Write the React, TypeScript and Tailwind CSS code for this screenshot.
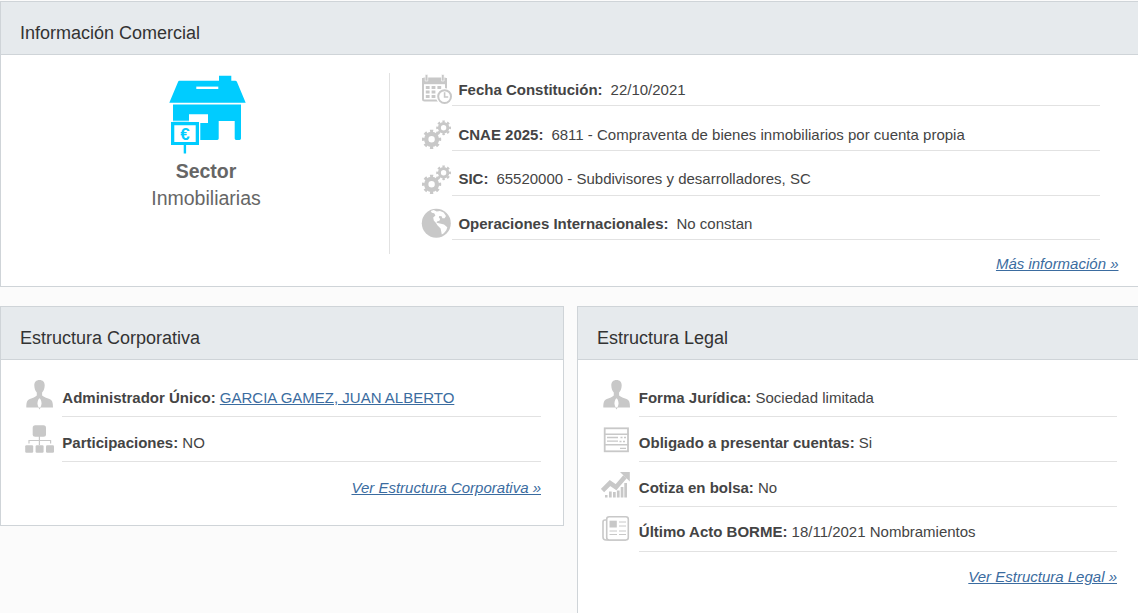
import type { ReactNode } from "react";

type IconProps = { children: ReactNode };

const Icon = ({ children }: IconProps) => (
  <svg
    className="h-8 w-8 shrink-0 fill-[#c8c8c8] text-[#c8c8c8]"
    viewBox="0 0 32 32"
  >
    {children}
  </svg>
);

const CalendarIcon = () => (
  <Icon>
    <rect x="2" y="4.5" width="23" height="22" rx="1.5" fill="#fff" stroke="currentColor" strokeWidth="2" />
    <rect x="1" y="4" width="25" height="6.2" />
    <path d="M4.2 0.5h2.6v6.5H4.2zM20.5 0.5h2.6v6.5h-2.6z" stroke="#fff" strokeWidth="0.6" />
    <path d="M4.8 12h3.8v3H4.8zM10.6 12h3.8v3h-3.8zM16.4 12h3.8v3h-3.8zM4.8 16.5h3.8v3H4.8zM10.6 16.5h3.8v3h-3.8zM4.8 21h3.8v3H4.8zM10.6 21h3.8v3h-3.8z" />
    <circle cx="23.6" cy="22.6" r="8.6" fill="#fff" />
    <circle cx="23.6" cy="22.6" r="6.4" fill="#fff" stroke="currentColor" strokeWidth="2" />
    <path d="M23.6 18.2v4.8h3.6" fill="none" stroke="currentColor" strokeWidth="1.6" />
  </Icon>
);

const GearsIcon = () => (
  <Icon>
    <g fill="none" stroke="currentColor">
      <circle cx="10.6" cy="20.3" r="5.4" strokeWidth="4.4" />
      <circle cx="10.6" cy="20.3" r="8.2" strokeWidth="2.8" pathLength="80" strokeDasharray="5 5" strokeDashoffset="2.5" />
      <circle cx="22.6" cy="8.8" r="4.2" strokeWidth="3" />
      <circle cx="22.6" cy="8.8" r="6.3" strokeWidth="2.2" pathLength="80" strokeDasharray="5 5" strokeDashoffset="2.5" />
    </g>
  </Icon>
);

const GlobeIcon = () => (
  <Icon>
    <circle cx="15.3" cy="15.3" r="14.5" />
    <path
      d="M9.700 3l3-.9 3 1.400 3.300-.6 3.600 1.700 2.400 3.400-1.400 2.200-2.200.1-.8-2-2.400-.2-.4 1.400 1.400 1.500-.8 1.800-2.400.6-.4 1.400 3.400.6 4 1.200 3.300 2.700-1 2.900-2.500 3-2 1.400-.6-3-.6-3-3-3-1.600-2.600-2.200-2.400-.6-3 2.200-2.200-1.200-2.200-2.400-.4z"
      fill="#fff"
    />
  </Icon>
);

const PersonIcon = () => (
  <Icon>
    <path d="M15.5 2c3.4 0 5.3 2.2 5.2 5.4-.1 3.2-1.2 5.6-2.6 7v3.2c1.600 1.600 4.600 2.400 7.400 3.400 2.600 1 3.500 3 3.500 8.600H2.300c0-5.600.9-7.600 3.500-8.600 2.800-1 5.600-1.800 7-3.400v-3.200c-1.400-1.400-2.400-3.800-2.500-7C10.200 4.200 12.100 2 15.500 2z" />
    <path d="M15.500 20.200c1.200.8 2 3 2 5 0 2-.8 4-2 5.200-1.200-1.200-2-3.200-2-5.200 0-2 .8-4.200 2-5z" fill="#fff" />
    <path d="M14.300 29.400h2.400l-1.200 2z" />
  </Icon>
);

const OrgIcon = () => (
  <Icon>
    <rect x="8.700" y="2.200" width="13.300" height="11.500" rx="2.500" />
    <path d="M15.400 13v9M5 20.500v-3h21.600v3" fill="none" stroke="currentColor" strokeWidth="1.200" />
    <rect x="1.200" y="22.300" width="8" height="7.500" rx="1.200" />
    <rect x="11.600" y="22.300" width="8" height="7.500" rx="1.200" />
    <rect x="22" y="22.300" width="8" height="7.500" rx="1.200" />
  </Icon>
);

const FormIcon = () => (
  <Icon>
    <rect x="3.700" y="5.300" width="23.300" height="23" fill="#fff" stroke="currentColor" strokeWidth="1.800" />
    <path d="M3.500 11.200h24M3.500 21.700h24" stroke="currentColor" strokeWidth="1.600" />
    <path d="M6 14.500h11M6 18.200h11M19.500 14.500h2M23 14.500h2M18.500 18.500h2M22 18.500h2M19 25.300h6" stroke="currentColor" strokeWidth="1.300" />
  </Icon>
);

const ChartIcon = () => (
  <Icon>
    <path d="M1.500 22.500 9 15l6 4.200 9-10.400" fill="none" stroke="currentColor" strokeWidth="4.600" />
    <path d="M19 4h9.800v9.500z" />
    <path d="M4 27h2.500v2.500H4zM8 23.500h2.700v6H8zM12 24h2.700v5.500H12zM15.900 22.500h2.700v7h-2.700zM19.700 19h2.700v10.500h-2.700zM23.300 15h2.700v14.500h-2.700z" />
  </Icon>
);

const NewsIcon = () => (
  <Icon>
    <g fill="none" stroke="currentColor" strokeWidth="1.600">
      <path d="M5.500 7H4a2 2 0 0 0-2 2v15a3 3 0 0 0 3 3h20" />
      <rect x="5.700" y="3.700" width="21.600" height="23.300" rx="2.500" fill="#fff" />
      <path d="M18 9h7M18 13h7M8.500 18h7.500M18 18h7M8.500 21.500h7.500M18 21.500h7" strokeWidth="1" />
    </g>
    <rect x="8.500" y="7.700" width="7.300" height="6.800" />
  </Icon>
);

const HouseIcon = () => (
  <svg className="ml-1 h-[84px] w-20 fill-[#00ccff]" viewBox="0 0 80 84">
    <path d="M11.300 6.700H51v-5h12.300v5h3.900q1.300 0 1.800 1.300l8.700 20.700H1.300L10 8q.4-1.300 1.300-1.300z" />
    <path d="M28.300 12.600h22v2.400h-22z" fill="#fff" />
    <path d="M5 30.600h68v34q0 1.400-1.400 1.400h-3.500q-1.400 0-1.400-1.400V47h-16v17.600q0 1.400-1.400 1.400H32.300V49H40v-8.700H21V48H5z" />
    <path d="M3 48h28v23H3z" />
    <path d="M6.300 51.300h21.400V68H6.300zM2.500 46.800h29v1h-29z" fill="#fff" />
    <path d="M15.700 71h2.400v8.500h-2.400z" />
    <text x="17" y="65.600" fontSize="17" fontWeight="700" fontFamily="Liberation Sans, sans-serif" textAnchor="middle">
      €
    </text>
  </svg>
);

type RowProps = { icon: ReactNode; label: string; children: ReactNode };

// row of the wide commercial panel
const WideRow = ({ icon, label, children }: RowProps) => (
  <div className="flex h-[44.6px] items-end">
    <div className="w-[31px] shrink-0">{icon}</div>
    <div className="flex-1 border-b border-[#e2e2e2] pb-[5.3px] pl-[6.4px] leading-5">
      <b className="mr-2">{label}</b>
      {children}
    </div>
  </div>
);

const Row = ({ icon, label, children }: RowProps) => (
  <div className="flex h-[44.9px] items-end">
    <div className="w-[38px] shrink-0 pb-[7px]">{icon}</div>
    <div className="flex-1 border-b border-[#e2e2e2] pb-[8.25px] leading-5">
      <b>{label}</b> {children}
    </div>
  </div>
);

const PanelTitle = ({ children }: { children: ReactNode }) => (
  <h2 className="h-[53px] border-b border-[#cfd4d8] bg-[#e6eaed] pt-[17px] pl-[19px] text-[18px] leading-7 text-[#333]">
    {children}
  </h2>
);

const MoreLink = ({ children }: { children: ReactNode }) => (
  <a href="#" className="block text-right leading-5 text-[#3b6ca0] italic underline">
    {children}
  </a>
);

export default function App() {
  return (
    <main className="h-[613px] w-[1138px] overflow-hidden bg-[#fbfbfb] pt-px font-['Liberation_Sans',Arial,sans-serif] text-[15px] text-[#444]">
      <section className="h-[286px] border-y border-l border-[#cfd4d8] bg-white">
        <PanelTitle>Información Comercial</PanelTitle>
        <div className="flex">
          <div className="mt-[18px] flex h-[181px] w-[389px] flex-col items-center border-r border-[#e2e2e2] pt-px pl-[22px] text-[19.5px] leading-[27px] text-[#666]">
            <HouseIcon />
            <b>Sector</b>
            <span>Inmobiliarias</span>
          </div>
          <div className="flex-1 pt-[6.8px] pl-[31px]">
            <div className="mr-[38px]">
              <WideRow icon={<CalendarIcon />} label="Fecha Constitución:">
                22/10/2021
              </WideRow>
              <WideRow icon={<GearsIcon />} label="CNAE 2025:">
                6811 - Compraventa de bienes inmobiliarios por cuenta propia
              </WideRow>
              <WideRow icon={<GearsIcon />} label="SIC:">
                65520000 - Subdivisores y desarrolladores, SC
              </WideRow>
              <WideRow icon={<GlobeIcon />} label="Operaciones Internacionales:">
                No constan
              </WideRow>
            </div>
            <div className="mt-[13.6px] mr-[19.5px]">
              <MoreLink>Más información »</MoreLink>
            </div>
          </div>
        </div>
      </section>

      <div className="mt-[19px] flex items-start gap-[13px]">
        <section className="h-[220px] w-[564px] shrink-0 border border-[#cfd4d8] bg-white">
          <PanelTitle>Estructura Corporativa</PanelTitle>
          <div className="pt-[12.1px] pr-[22px] pl-[23.3px]">
            <Row icon={<PersonIcon />} label="Administrador Único:">
              <a href="#" className="text-[#3b6ca0] underline">
                GARCIA GAMEZ, JUAN ALBERTO
              </a>
            </Row>
            <Row icon={<OrgIcon />} label="Participaciones:">
              NO
            </Row>
            <div className="mt-4">
              <MoreLink>Ver Estructura Corporativa »</MoreLink>
            </div>
          </div>
        </section>

        <section className="h-[320px] flex-1 border-t border-l border-[#cfd4d8] bg-white">
          <PanelTitle>Estructura Legal</PanelTitle>
          <div className="pt-[12.1px] pr-[21px] pl-[22.8px]">
            <Row icon={<PersonIcon />} label="Forma Jurídica:">
              Sociedad limitada
            </Row>
            <Row icon={<FormIcon />} label="Obligado a presentar cuentas:">
              Si
            </Row>
            <Row icon={<ChartIcon />} label="Cotiza en bolsa:">
              No
            </Row>
            <Row icon={<NewsIcon />} label="Último Acto BORME:">
              18/11/2021 Nombramientos
            </Row>
            <div className="mt-[15.3px]">
              <MoreLink>Ver Estructura Legal »</MoreLink>
            </div>
          </div>
        </section>
      </div>
    </main>
  );
}
